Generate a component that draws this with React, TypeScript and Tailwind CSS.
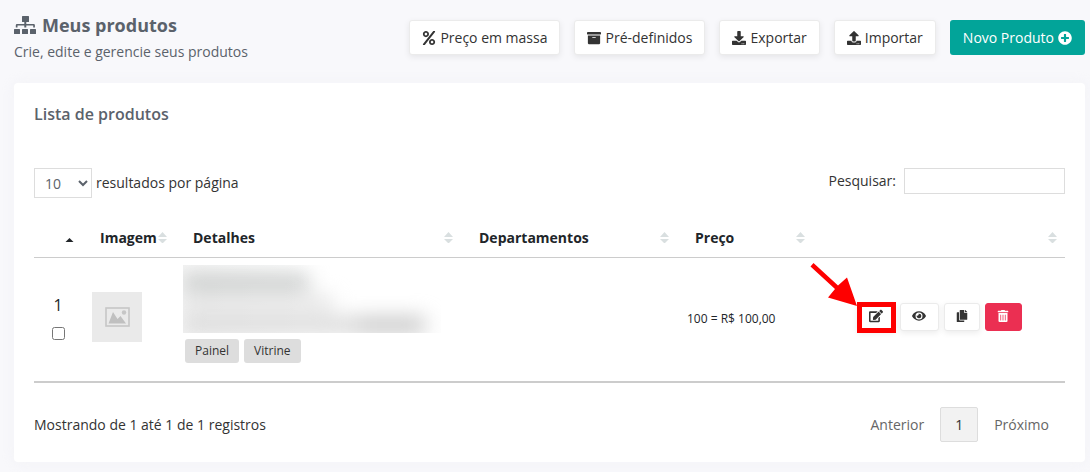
import { clsx } from "clsx";
import type { ReactNode } from "react";
import {
  FaArchive,
  FaCopy,
  FaDownload,
  FaEdit,
  FaEye,
  FaPercent,
  FaPlusCircle,
  FaTrashAlt,
  FaUpload,
} from "react-icons/fa";

type SortState = "none" | "asc";

type Column = {
  readonly label: string;
  readonly width: string;
  readonly sort: SortState;
};

const COLUMNS: Column[] = [
  { label: "", width: "w-[48px]", sort: "asc" },
  { label: "Imagem", width: "w-[93px]", sort: "none" },
  { label: "Detalhes", width: "w-[286px]", sort: "none" },
  { label: "Departamentos", width: "w-[216px]", sort: "none" },
  { label: "Preço", width: "w-[136px]", sort: "none" },
  { label: "", width: "w-[252px]", sort: "none" },
];

const TAGS = ["Painel", "Vitrine"];

interface ToolbarButtonProps {
  icon: ReactNode;
  children: ReactNode;
}

function ToolbarButton({ icon, children }: ToolbarButtonProps) {
  return (
    <button
      type="button"
      className="flex h-[35px] items-center gap-1 rounded-[3px] border border-[#ebebeb] bg-white px-3 text-sm text-[#333] shadow-[0_2px_6px_rgba(0,0,0,0.08)]"
    >
      {icon}
      {children}
    </button>
  );
}

function SitemapIcon() {
  return (
    <svg className="h-[18px] w-[22px]" viewBox="0 0 22 18" fill="currentColor" aria-hidden="true">
      <rect x="8" y="0" width="7" height="6" rx="0.5" />
      <path d="M10.3 5h2v3h7.4a1.2 1.2 0 011.2 1.2V11.5h-1.7V9.5H12.3v2h-2v-2H3.5v2H1.8V9.2A1.2 1.2 0 013 8h7.3z" />
      <rect x="0" y="13" width="6" height="5" rx="0.5" />
      <rect x="8" y="13" width="6" height="5" rx="0.5" />
      <rect x="16" y="13" width="6" height="5" rx="0.5" />
    </svg>
  );
}

function SortIcon({ sort }: { sort: SortState }) {
  if (sort === "asc") {
    return (
      <svg className="h-[11px] w-[9px]" viewBox="0 0 9 11" aria-hidden="true">
        <path d="M0.5 10h8L4.5 6z" fill="#212529" />
      </svg>
    );
  }
  return (
    <svg className="h-[11px] w-[9px]" viewBox="0 0 9 11" aria-hidden="true">
      <path d="M0 5h9L4.5 0zM0 7h9L4.5 11.5z" fill="#d9dfe0" />
    </svg>
  );
}

function ImagePlaceholder() {
  return (
    <div className="flex size-[50px] items-center justify-center bg-[#eaeaea]">
      <svg className="h-5 w-[25px]" viewBox="0 0 25 20" role="img" aria-label="Sem imagem">
        <rect x="1" y="1" width="23" height="18" fill="none" stroke="#c6c6c6" strokeWidth="1.6" />
        <path d="M3.5 16.5L8 5l4.5 7 3-3 5.5 7.5z" fill="#c0c0c0" />
        <circle cx="19" cy="5.5" r="2.2" fill="#c6c6c6" />
      </svg>
    </div>
  );
}

// Product name and description are hidden behind a heavy blur
function HiddenDetails() {
  return (
    <div
      className="-ml-0.5 h-[68px] w-[258px] overflow-hidden bg-linear-to-r from-[#f6f6f6] to-white to-50%"
      aria-hidden="true"
    >
      <div className="flex h-full flex-col gap-2 pt-2.5 blur-[10px]">
        <div className="h-[16px] w-[126px] bg-[#c0c3c2]" />
        <div className="h-[14px] w-[150px] bg-[#dedede]" />
        <div className="flex h-[18px]">
          <div className="w-[176px] bg-[#d6d6d6]" />
          <div className="w-[66px] bg-[#c4c4c4]" />
        </div>
      </div>
    </div>
  );
}

interface ActionButtonProps {
  label: string;
  width: string;
  danger?: boolean;
  children: ReactNode;
}

function ActionButton({ label, width, danger = false, children }: ActionButtonProps) {
  return (
    <button
      type="button"
      aria-label={label}
      className={clsx(
        "flex h-7 items-center justify-center rounded-[3px] border pb-0.5 text-xs",
        width,
        danger
          ? "border-[#eb2f52] bg-[#eb2f52] text-white"
          : "border-[#ebebeb] bg-white text-[#333] shadow-[0_2px_6px_rgba(0,0,0,0.08)]"
      )}
    >
      {children}
    </button>
  );
}

function EditHighlight() {
  return (
    <>
      <div className="pointer-events-none absolute -top-px -right-px -bottom-0.5 left-0 border-[5px] border-[#fe0000]" />
      <svg
        className="pointer-events-none absolute -top-10 -left-12 h-[43px] w-[48px]"
        viewBox="0 0 48 43"
        aria-hidden="true"
      >
        <path d="M4.5 0L29 22.5 38 14.5 48 43 19 34.5 26 26 1.5 3.5z" fill="#fe0000" />
      </svg>
    </>
  );
}

function ProductTable() {
  return (
    <table className="w-full table-fixed border-collapse border-b-2 border-[#ccc]">
      <thead>
        <tr className="border-b border-[#ccc]">
          {COLUMNS.map((column, i) => (
            <th key={i} scope="col" className={clsx("h-[38px] pr-2 pl-[18px] text-left", column.width)}>
              <div className="flex items-center justify-between text-sm font-bold text-[#212529]">
                <span>{column.label}</span>
                <SortIcon sort={column.sort} />
              </div>
            </th>
          ))}
        </tr>
      </thead>
      <tbody>
        <tr className="h-[125px] text-[#212529]">
          <td className="text-center">
            <label htmlFor="product-1" className="block text-base leading-6 font-medium">
              1
            </label>
            <input id="product-1" type="checkbox" className="mt-2.5 size-[13px]" />
          </td>
          <td className="px-2.5 pb-1">
            <ImagePlaceholder />
          </td>
          <td className="px-2.5 pt-[7px] pb-2 align-top">
            <HiddenDetails />
            <div className="mt-1.5 flex gap-[5px]">
              {TAGS.map((tag) => (
                <span
                  key={tag}
                  className="rounded-[3px] bg-[#ddd] px-2.5 text-xs leading-6 text-[#333]"
                >
                  {tag}
                </span>
              ))}
            </div>
          </td>
          <td />
          <td className="px-2.5 text-xs">100 = R$ 100,00</td>
          <td className="pb-1">
            <div className="flex justify-center gap-[5px]">
              <div className="relative">
                <ActionButton label="Editar" width="w-[38px]">
                  <FaEdit className="text-sm" />
                </ActionButton>
                <EditHighlight />
              </div>
              <ActionButton label="Visualizar" width="w-[39px]">
                <FaEye className="text-sm" />
              </ActionButton>
              <ActionButton label="Duplicar" width="w-[36px]">
                <FaCopy />
              </ActionButton>
              <ActionButton label="Excluir" width="w-[37px]" danger>
                <FaTrashAlt />
              </ActionButton>
            </div>
          </td>
        </tr>
      </tbody>
    </table>
  );
}

export default function App() {
  return (
    <main className="min-h-screen bg-[#f8f8fb] pt-3.5 pr-[5px] pb-2.5 pl-3.5 font-['Open_Sans',sans-serif] text-sm text-[#333]">
      <header className="flex items-start justify-between">
        <div className="text-[#5b626b]">
          <h1 className="flex items-center gap-1.5 text-lg leading-[22px] font-bold">
            <SitemapIcon />
            Meus produtos
          </h1>
          <p className="mt-1 leading-6">Crie, edite e gerencie seus produtos</p>
        </div>
        <div className="flex items-center gap-3.5 pt-1.5">
          <ToolbarButton icon={<FaPercent />}>Preço em massa</ToolbarButton>
          <ToolbarButton icon={<FaArchive />}>Pré-definidos</ToolbarButton>
          <ToolbarButton icon={<FaDownload />}>Exportar</ToolbarButton>
          <ToolbarButton icon={<FaUpload />}>Importar</ToolbarButton>
          <button
            type="button"
            className="flex h-[35px] items-center gap-1 rounded-[3px] bg-[#02a499] px-[13px] text-sm text-white"
          >
            Novo Produto
            <FaPlusCircle />
          </button>
        </div>
      </header>

      <section className="mt-[19px] rounded bg-white px-5 pt-[19px] pb-5 shadow-[0_0_13px_rgba(236,236,241,0.44)]">
        <h2 className="text-base leading-6 font-semibold text-[#5b626b]">Lista de produtos</h2>

        <div className="mt-[42px] flex items-start justify-between">
          <label className="flex items-center gap-1">
            <select
              defaultValue="10"
              className="h-[30px] w-[58px] border border-[#ddd] bg-white pl-1.5 text-sm text-[#5b626b]"
            >
              <option>10</option>
              <option>25</option>
              <option>50</option>
              <option>100</option>
            </select>
            resultados por página
          </label>
          <label className="flex items-center gap-2">
            Pesquisar:
            <input type="search" className="h-[26px] w-[161px] border border-[#ddd] bg-white px-2" />
          </label>
        </div>

        <div className="mt-[21px]">
          <ProductTable />
        </div>

        <div className="mt-6 flex items-center justify-between">
          <p>Mostrando de 1 até 1 de 1 registros</p>
          <nav aria-label="Paginação" className="flex items-center text-[#666]">
            <button type="button" className="h-[35px] px-4">
              Anterior
            </button>
            <button
              type="button"
              aria-current="page"
              className="h-[35px] w-[38px] rounded-[2px] border border-[#ddd] bg-[#f2f2f2] text-[#333]"
            >
              1
            </button>
            <button type="button" className="h-[35px] px-4">
              Próximo
            </button>
          </nav>
        </div>
      </section>
    </main>
  );
}
